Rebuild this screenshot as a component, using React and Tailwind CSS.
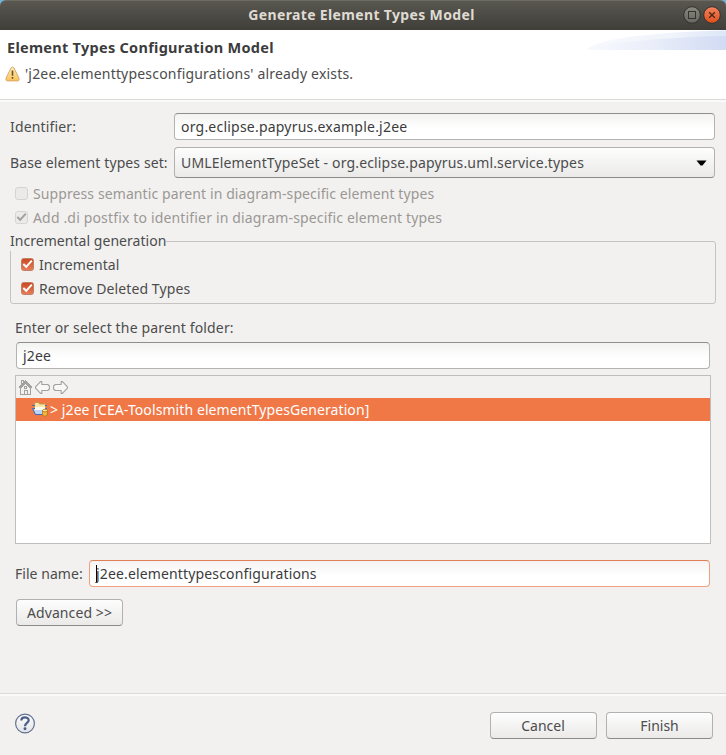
const inputBox =
  "flex h-[27px] items-center rounded-[4px] border border-[#b5b3b1] border-t-[#8f8e8c] bg-linear-to-b from-[#f3f3f2] to-white to-60% pl-[6px] text-[#3c3c3c]";
const buttonBox =
  "flex h-[27px] w-[107px] items-center justify-center rounded-[4px] border border-[#b3b1af] border-b-[#8d8b89] bg-linear-to-b from-[#fdfdfd] to-[#ebeae9]";

function Check({ disabled }) {
  return (
    <svg width="13" height="13" viewBox="0 0 13 13" className="shrink-0">
      <defs>
        <linearGradient id="on" x1="0" y1="0" x2="0" y2="1">
          <stop offset="0" stopColor="#c9481c" />
          <stop offset="1" stopColor="#e8805a" />
        </linearGradient>
      </defs>
      <rect x=".5" y=".5" width="12" height="12" rx="2.2"
        fill={disabled ? "#ebeae9" : "url(#on)"} stroke={disabled ? "#d6d4d2" : "#c08068"} />
      <path d="M2.300 6 5.200 8.800 10.800 2.600" fill="none" stroke={disabled ? "#a3a09d" : "#fff"} strokeWidth="2" />
    </svg>
  );
}

function Warning() {
  return (
    <svg width="15" height="16" viewBox="0 0 15 16">
      <defs>
        <linearGradient id="warn" x1="0" y1="0" x2="0" y2="1">
          <stop offset="0" stopColor="#fff0bd" />
          <stop offset="1" stopColor="#f8c15c" />
        </linearGradient>
      </defs>
      <path d="M6 2Q7.500 .2 9 2L13.900 12Q14.700 14.900 12.500 14.900H2.500Q.3 14.900 1.100 12Z" fill="url(#warn)" stroke="#dcA868" />
      <path d="M7.500 4.500V9.800M7.500 11V12.800" stroke="#6b5120" strokeWidth="1.600" />
    </svg>
  );
}

function Home() {
  return (
    <svg width="13" height="15" viewBox="0 0 13 15" fill="none" stroke="#a3a19f" shapeRendering="crispEdges">
      <path d="M1.500 7V14.500H11.500V7M2.500 4V.5H4.500V2" />
      <path d="M0 7.500 6.500 1 13 7.500M2 7.500 6.500 3 11 7.500" />
      <path d="M5.500 14V10.500H8.500V14M5.500 6.500H7.500V8.500H5.500Z" />
    </svg>
  );
}

function Arrow({ flip }) {
  return (
    <svg width="15" height="13" viewBox="0 0 15 13" className={flip ? "-scale-x-100" : ""}>
      <path d="M5.500 .6H6.800V3.500H12.800L14.400 5V8L12.800 9.500H6.800V12.400H5.500L.6 7.200V5.800Z" fill="#f7f7f6" stroke="#a3a19f" strokeWidth="1.100" strokeLinejoin="round" />
    </svg>
  );
}

function Project() {
  return (
    <svg width="16" height="15" viewBox="0 0 16 15">
      <path d="M2.500 7V2L3.500 .5H6.500L7.500 2H13.500V7" fill="#fbe6a4" stroke="#c79a55" />
      <path d="M0 3.500H3M13 3.500H15" stroke="#4a6fa5" />
      <path d="M.5 6.500H14.500L12 12.500H3.500Z" fill="#b9d5f7" stroke="#3f6bb5" />
      <path d="M3 5H13V8H3Z" fill="#fffaf0" />
      <path d="M10.500 8.500V13.300Q13 15.300 15.300 13.300V8.500" fill="#f3b73c" stroke="#a8761c" strokeWidth=".8" />
      <ellipse cx="12.900" cy="8.500" rx="2.400" ry="1.300" fill="#ffe69a" stroke="#a8761c" strokeWidth=".8" />
    </svg>
  );
}

function WindowButtons() {
  return (
    <svg width="38" height="20" viewBox="0 0 38 20">
      <defs>
        <linearGradient id="max" x1="0" y1="0" x2="0" y2="1">
          <stop offset="0" stopColor="#8a8880" />
          <stop offset="1" stopColor="#66655e" />
        </linearGradient>
        <linearGradient id="close" x1="0" y1="0" x2="0" y2="1">
          <stop offset="0" stopColor="#f5835e" />
          <stop offset="1" stopColor="#e04f1c" />
        </linearGradient>
      </defs>
      <circle cx="9" cy="10" r="8.300" fill="url(#max)" stroke="#33322e" />
      <rect x="5.500" y="6.500" width="7" height="7" fill="none" stroke="#34332f" />
      <circle cx="29" cy="10" r="8.300" fill="url(#close)" stroke="#33322e" />
      <path d="M26.200 7.200 31.800 12.800M31.800 7.200 26.200 12.800" stroke="#4b2a1c" strokeWidth="1.400" />
    </svg>
  );
}

function Swoosh() {
  return (
    <svg width="140" height="20" viewBox="0 0 140 20">
      <defs>
        <linearGradient id="sw1" x1="0" x2="1">
          <stop offset="0" stopColor="#f7f9fd" />
          <stop offset=".6" stopColor="#f0f4fb" />
          <stop offset="1" stopColor="#dde7f7" />
        </linearGradient>
        <linearGradient id="sw2" x1="0" x2="1">
          <stop offset="0" stopColor="#f8fafe" />
          <stop offset=".5" stopColor="#e9edf9" />
          <stop offset="1" stopColor="#d1dbf4" />
        </linearGradient>
      </defs>
      <path d="M0 20C12 8 70 2 140 .5V20Z" fill="url(#sw1)" />
      <path d="M0 20C18 13 80 7 140 6V20Z" fill="url(#sw2)" />
    </svg>
  );
}

function Option({ label, disabled, checked = true, className }) {
  return (
    <label className={`flex h-6 items-center ${disabled ? "gap-[5px] text-[#9b9894]" : "gap-[5px]"}`}>
      {checked ? (
        <span className="-mt-px">
          <Check disabled={disabled} />
        </span>
      ) : (
        <span className="-mt-px size-[13px] rounded-[3px] border border-[#d6d4d2] bg-[#ebeae9]" />
      )}
      <span className={className}>{label}</span>
    </label>
  );
}

export default function App() {
  return (
    <div className="flex h-[755px] w-[726px] flex-col overflow-hidden bg-[#f2f1f0] font-['Noto_Sans',sans-serif] text-[14px] leading-[20px] whitespace-nowrap text-[#4c4c4c]">
      <div className="h-[30px] shrink-0 bg-[#6fb4d8]">
        <header className="grid h-[30px] grid-cols-[1fr_auto_1fr] items-center rounded-t-[6px] border-t border-[#6b6a63] bg-linear-to-b from-[#595750] to-[#3f3e39] pr-[5px]">
          <span />
          <h1 className="mt-[-1px] ml-[2px] font-bold tracking-[0.35px] text-[#dfdbd2]">Generate Element Types Model</h1>
          <div className="-mt-px flex justify-end">
            <WindowButtons />
          </div>
        </header>
      </div>

      <section className="flex h-[69px] shrink-0 justify-between bg-white">
        <div className="pt-[7px] pl-[7px]">
          <h2 className="text-[14.5px] font-bold tracking-[0.28px] text-[#3c3c3c]">Element Types Configuration Model</h2>
          <div className="mt-[7px] ml-[-2px] flex items-center gap-[5px]">
            <Warning />
            <span className="tracking-[0.19px]">'j2ee.elementtypesconfigurations' already exists.</span>
          </div>
        </div>
        <Swoosh />
      </section>
      <div className="h-[3px] shrink-0 border-t border-[#d9d9d8] bg-[#fafafa]" />

      <main className="flex h-[591px] shrink-0 flex-col pt-[11px]">
        <div className="flex items-center pr-[11px] pl-[10px]">
          <span className="w-[164px] tracking-[0.15px]">Identifier:</span>
          <div className={`${inputBox} flex-1 tracking-[0.22px]`}>org.eclipse.papyrus.example.j2ee</div>
        </div>
        <div className="mt-[7px] flex items-center pr-[11px] pl-[10px]">
          <span className="w-[164px] tracking-[0.1px]">Base element types set:</span>
          <div className="flex h-[31px] flex-1 items-center justify-between rounded-[4px] border border-[#b3b1af] border-b-[#8d8b89] bg-linear-to-b from-[#fdfdfd] to-[#ebeae9] pr-[7px] pl-[6px] tracking-[0.16px]">
            UMLElementTypeSet - org.eclipse.papyrus.uml.service.types
            <svg width="11" height="6" viewBox="0 0 11 6">
              <path d="M.5 .5H10.500L6.500 5.500H4.500Z" fill="#000" />
            </svg>
          </div>
        </div>
        <div className="mt-[4px] flex flex-col pl-[15px]">
          <Option disabled checked={false} className="tracking-[0.1px]" label="Suppress semantic parent in diagram-specific element types" />
          <Option disabled className="tracking-[0.16px]" label="Add .di postfix to identifier in diagram-specific element types" />
        </div>

        <fieldset className="mx-[10px] mt-[1px] h-[73px] rounded-[3px] border border-[#c6c4c2] pl-[10px]">
          <legend className="-ml-[11px] bg-[#f2f1f0] tracking-[0.04px]">Incremental generation</legend>
          <div className="mt-[2px]">
            <Option className="tracking-[0.06px]" label="Incremental" />
            <Option className="tracking-[0.1px]" label="Remove Deleted Types" />
          </div>
        </fieldset>

        <div className="mt-[14px] flex flex-col pr-[15px] pl-[15px]">
          <span className="tracking-[0.15px]">Enter or select the parent folder:</span>
          <div className={`${inputBox} mt-[4px] mr-[1px] ml-[1px] tracking-[0.2px]`}>j2ee</div>
          <div className="mt-[6px] h-[169px] border border-[#c0bebc] bg-white">
            <div className="flex h-[22px] items-center gap-[3px] bg-[#f2f1f0] pl-[3px]">
              <Home />
              <Arrow />
              <Arrow flip />
            </div>
            <div className="flex h-[23px] items-center gap-[2px] bg-[#f07746] pl-[16px] text-white">
              <Project />
              <span className="tracking-[0.09px]">&gt; j2ee [CEA-Toolsmith elementTypesGeneration]</span>
            </div>
          </div>
          <div className="mt-[16px] mr-[1px] flex items-center">
            <span className="w-[74px] tracking-[0.04px]">File name:</span>
            <div className="flex h-[27px] flex-1 items-center rounded-[4px] border border-[#f0a081] border-t-[#de7f58] bg-linear-to-b from-[#f5f3f2] to-white to-60% pl-[6px] text-[#3c3c3c]">
              <span className="-mr-px h-[17px] w-px bg-black" />
              <span className="tracking-[0.15px]">j2ee.elementtypesconfigurations</span>
            </div>
          </div>
          <button className={`${buttonBox} mt-[12px] ml-[1px] tracking-[0.1px]`}>Advanced &gt;&gt;</button>
        </div>
      </main>

      <footer className="flex flex-1 flex-col">
        <div className="h-[3px] border-t border-[#dad9d8] bg-[#fafafa]" />
        <div className="flex items-center justify-between pt-[16px] pr-[13px] pl-[15px]">
          <svg width="21" height="21" viewBox="0 0 21 21" className="-mt-[4px]">
            <defs>
              <linearGradient id="help" x1="0" y1="0" x2="0" y2="1">
                <stop offset="0" stopColor="#fff" />
                <stop offset="1" stopColor="#e2e3e7" />
              </linearGradient>
            </defs>
            <circle cx="10" cy="10.500" r="9.400" fill="url(#help)" stroke="#61718f" strokeWidth="1.200" />
            <path d="M6.300 7.500C6.300 3.300 13.700 3.300 13.700 7.300 13.700 10 10 9.900 10 13.200" fill="none" stroke="#4a5f8a" strokeWidth="2.200" />
            <circle cx="10" cy="15.800" r="1.450" fill="#4a5f8a" />
          </svg>
          <div className="flex gap-[9px]">
            <button className={`${buttonBox} pr-[1px]`}>Cancel</button>
            <button className={buttonBox}>Finish</button>
          </div>
        </div>
      </footer>
    </div>
  );
}
